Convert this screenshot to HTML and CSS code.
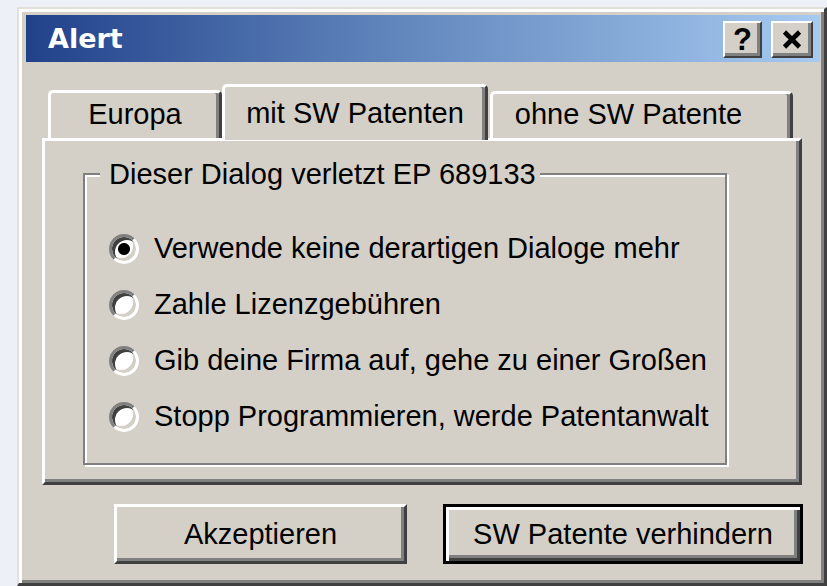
FILE: index.html
```html
<!DOCTYPE html>
<html lang="de">
<head>
<meta charset="utf-8">
<title>Alert</title>
<link rel="stylesheet" href="styles.css">
</head>
<body>
<div class="window">
  <div class="titlebar">
    <span class="title">Alert</span>
    <div class="caption-buttons">
      <button class="cap-btn cap-help">?</button>
      <button class="cap-btn cap-close" aria-label="Schließen">
        <svg width="20" height="19" viewBox="0 0 20 19"><path d="M2.5 2 L17.5 17 M17.5 2 L2.5 17" stroke="#000" stroke-width="4.6" fill="none"/></svg>
      </button>
    </div>
  </div>
  <div class="body">
    <div class="tabs">
      <div class="tab tab-europa">Europa</div>
      <div class="tab tab-active">mit SW Patenten</div>
      <div class="tab tab-ohne">ohne SW Patente</div>
    </div>
    <div class="panel">
      <fieldset class="group">
        <legend>Dieser Dialog verletzt EP 689133</legend>
        <div class="options">
          <label class="option"><span class="radio checked"></span>Verwende keine derartigen Dialoge mehr</label>
          <label class="option"><span class="radio"></span>Zahle Lizenzgebühren</label>
          <label class="option"><span class="radio"></span>Gib deine Firma auf, gehe zu einer Großen</label>
          <label class="option"><span class="radio"></span>Stopp Programmieren, werde Patentanwalt</label>
        </div>
      </fieldset>
    </div>
    <div class="actions">
      <button class="btn btn-accept">Akzeptieren</button>
      <button class="btn btn-default">SW Patente verhindern</button>
    </div>
  </div>
</div>
</body>
</html>
```

FILE: styles.css
```css
* {
  box-sizing: border-box;
}

body {
  margin: 0;
  background: #eef0f7;
  font-family: "Liberation Sans", Arial, sans-serif;
  font-size: 29px;
  color: #000;
}

/* classic 3D window frame */
.window {
  width: 810px;
  height: 579px;
  margin: 7px 0 0 17px;
  background: #d4d0c8;
  border-style: solid;
  border-width: 2px 3px 3px 2px;
  border-color: #e2e0da #404040 #404040 #e2e0da;
  box-shadow: inset 3px 3px 0 #fff, inset -3px -3px 0 #808080;
  padding: 6px 4px 0 7px;
  display: flex;
  flex-direction: column;
}

.titlebar {
  height: 47px;
  flex: none;
  display: flex;
  align-items: center;
  justify-content: space-between;
  padding: 0 7px 0 22px;
  background: linear-gradient(to right, #21418a 0%, #5f84bb 45%, #a6caf0 100%);
  color: #fff;
}

.title {
  font-family: "DejaVu Sans", sans-serif;
  font-weight: bold;
  font-size: 27px;
}

.caption-buttons {
  display: flex;
  gap: 9px;
  margin-top: 1px;
}

.cap-btn {
  height: 37px;
  padding: 0;
  display: flex;
  align-items: center;
  justify-content: center;
  background: #d4d0c8;
  border: 2px solid;
  border-color: #fff #404040 #404040 #fff;
  box-shadow: inset -3px -3px 0 #808080;
  color: #000;
}

.cap-help {
  width: 39px;
  font-family: "Liberation Sans", Arial, sans-serif;
  font-weight: bold;
  font-size: 31px;
  line-height: 1;
}

.cap-close {
  width: 42px;
}

.body {
  flex: 1;
  padding: 22px 18px 0 16px;
  display: flex;
  flex-direction: column;
}

/* tab strip */
.tabs {
  height: 54px;
  display: flex;
  align-items: flex-end;
  padding-left: 6px;
  position: relative;
  z-index: 1;
}

.tab {
  height: 48px;
  display: flex;
  align-items: flex-end;
  justify-content: center;
  line-height: 33px;
  padding-bottom: 7px;
  background: #d4d0c8;
  border-top: 3px solid #fff;
  border-left: 3px solid #fff;
  border-right: 3px solid #404040;
  border-radius: 5px 5px 0 0;
  box-shadow: inset -3px 0 0 #808080;
  white-space: nowrap;
}

.tab-europa {
  width: 174px;
}

.tab-active {
  width: 266px;
  height: 56px;
  margin-bottom: -2px;
  padding-bottom: 10px;
}

.tab-ohne {
  width: 303px;
  height: 47px;
  margin-left: 2px;
  padding-right: 26px;
}

.panel {
  height: 347px;
  flex: none;
  border: 3px solid;
  border-color: #fff #404040 #404040 #fff;
  box-shadow: inset -3px -3px 0 #808080;
  padding: 18px 0 0 38px;
}

/* etched group box */
.group {
  width: 644px;
  margin: 0;
  padding: 43px 0 30px 0;
  border: 2px solid #808080;
  box-shadow: inset 2px 2px 0 #fff, 2px 2px 0 #fff;
}

.group legend {
  margin-left: 15px;
  padding: 0 4px 0 9px;
  line-height: 30px;
  background: #d4d0c8;
}

.options {
  display: flex;
  flex-direction: column;
  gap: 23px;
  padding-left: 24px;
}

.option {
  display: flex;
  align-items: center;
  gap: 15px;
  height: 33px;
  line-height: 33px;
  white-space: nowrap;
}

.radio {
  flex: none;
  width: 30px;
  height: 30px;
  border-radius: 50%;
  border: 3px solid;
  border-color: #808080 #fff #fff #808080;
  background: #fff;
  box-shadow: inset 3px 3px 0 #404040, inset -3px -3px 0 #d4d0c8;
}

.radio.checked {
  background: radial-gradient(circle, #000 0 5.5px, #fff 6.5px);
}

/* dialog buttons */
.actions {
  display: flex;
  justify-content: flex-end;
  gap: 36px;
  margin-top: 19px;
  margin-right: -1px;
}

.btn {
  height: 60px;
  padding: 0;
  font: inherit;
  color: #000;
  background: #d4d0c8;
  border: 3px solid;
  border-color: #fff #404040 #404040 #fff;
  box-shadow: inset -3px -3px 0 #808080;
  white-space: nowrap;
}

.btn-accept {
  width: 293px;
}

.btn-default {
  width: 360px;
  border-color: #000;
  box-shadow: inset 3px 3px 0 #fff, inset -3px -3px 0 #404040, inset -6px -6px 0 #808080;
}
```
